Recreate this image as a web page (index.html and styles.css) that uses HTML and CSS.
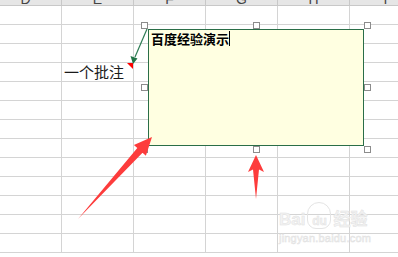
FILE: index.html
```html
<!DOCTYPE html>
<html lang="zh-CN">

<head>
    <meta charset="UTF-8">
    <title>批注</title>
    <link rel="stylesheet" href="styles.css">
</head>

<body>
    <div class="sheet">
        <div class="col-head">D</div><div class="col-head">E</div><div class="col-head">F</div><div class="col-head">G</div><div class="col-head">H</div><div class="col-head">I</div>
        <div class="cell"></div><div class="cell"></div><div class="cell"></div><div class="cell"></div><div class="cell"></div><div class="cell"></div>
        <div class="cell"></div><div class="cell"></div><div class="cell"></div><div class="cell"></div><div class="cell"></div><div class="cell"></div>
        <div class="cell"></div><div class="cell"></div><div class="cell"></div><div class="cell"></div><div class="cell"></div><div class="cell"></div>
        <div class="cell"></div><div class="cell has-note">一个批注</div><div class="cell"></div><div class="cell"></div><div class="cell"></div><div class="cell"></div>
        <div class="cell"></div><div class="cell"></div><div class="cell"></div><div class="cell"></div><div class="cell"></div><div class="cell"></div>
        <div class="cell"></div><div class="cell"></div><div class="cell"></div><div class="cell"></div><div class="cell"></div><div class="cell"></div>
        <div class="cell"></div><div class="cell"></div><div class="cell"></div><div class="cell"></div><div class="cell"></div><div class="cell"></div>
        <div class="cell"></div><div class="cell"></div><div class="cell"></div><div class="cell"></div><div class="cell"></div><div class="cell"></div>
        <div class="cell"></div><div class="cell"></div><div class="cell"></div><div class="cell"></div><div class="cell"></div><div class="cell"></div>
        <div class="cell"></div><div class="cell"></div><div class="cell"></div><div class="cell"></div><div class="cell"></div><div class="cell"></div>
        <div class="cell"></div><div class="cell"></div><div class="cell"></div><div class="cell"></div><div class="cell"></div><div class="cell"></div>
        <div class="cell"></div><div class="cell"></div><div class="cell"></div><div class="cell"></div><div class="cell"></div><div class="cell"></div>
        <div class="cell"></div><div class="cell"></div><div class="cell"></div><div class="cell"></div><div class="cell"></div><div class="cell"></div>
    </div>

    <!-- comment box being edited -->
    <div class="comment">百度经验演示<span class="caret"></span></div>

    <span class="handle" style="left: 141px; top: 22px;"></span>
    <span class="handle" style="left: 253px; top: 22px;"></span>
    <span class="handle" style="left: 364px; top: 22px;"></span>
    <span class="handle" style="left: 141px; top: 84px;"></span>
    <span class="handle" style="left: 364px; top: 84px;"></span>
    <span class="handle" style="left: 141px; top: 146px;"></span>
    <span class="handle" style="left: 253px; top: 146px;"></span>
    <span class="handle" style="left: 364px; top: 146px;"></span>

    <svg class="overlay" width="398" height="257" viewBox="0 0 398 257">
        <!-- note indicator and leader line -->
        <polygon points="127,63 133,63 133,69" fill="#ff0000" />
        <line x1="147" y1="29" x2="135" y2="57" stroke="#2f7d55" stroke-width="1.2" />
        <polygon points="133,64 130.5,56 137.5,58.5" fill="#217346" />
        <!-- red pointer arrows -->
        <polygon points="78,219 137.3,148 133.9,145 152,137 145.9,155.8 142.5,152.8" fill="#fd3c3c" />
        <polygon points="256,155 264,172 259,169.5 256,199 253,169.5 248,172" fill="#fd3c3c" />
    </svg>

    <div class="watermark">
        <div class="mark-top">Bai<span class="paw">du</span>经验</div>
        <div class="mark-url">jingyan.baidu.com</div>
    </div>
</body>

</html>
```

FILE: styles.css
```css
body {
    margin: 0;
    background-color: #fff;
    font-family: "Liberation Sans", Arial, sans-serif;
    overflow: hidden;
    width: 398px;
    height: 257px;
    position: relative;
}

.sheet {
    display: grid;
    grid-template-columns: repeat(6, 72px);
    grid-template-rows: 20px;
    grid-auto-rows: 19px;
    margin: -14px 0 0 -10px;
}

.col-head {
    box-sizing: border-box;
    background-color: #e6e6e6;
    border-right: 1px solid #c8c8c8;
    border-bottom: 1px solid #c8c8c8;
    text-align: center;
    font-size: 14px;
    line-height: 18px;
    padding-top: 4px;
    color: #444;
}

.cell {
    box-sizing: border-box;
    border-right: 1px solid #d4d4d4;
    border-bottom: 1px solid #d4d4d4;
}

.has-note {
    font-family: "Noto Sans CJK SC", sans-serif;
    font-size: 15px;
    line-height: 18px;
    padding-left: 2px;
    color: #1a1a1a;
    white-space: nowrap;
}

.comment {
    position: absolute;
    left: 148px;
    top: 29px;
    width: 216px;
    height: 117px;
    box-sizing: border-box;
    border: 1px solid #2a6e48;
    background-color: #ffffe1;
    padding: 1px 0 0 2px;
    font-family: "Noto Sans CJK SC", sans-serif;
    font-weight: bold;
    font-size: 13px;
    line-height: 16px;
    color: #000;
}

.caret {
    display: inline-block;
    width: 0;
    height: 15px;
    border-left: 1px solid #000;
    vertical-align: -2px;
}

.handle {
    position: absolute;
    width: 7px;
    height: 7px;
    box-sizing: border-box;
    border: 1px solid #8c8c8c;
    background-color: #fff;
}

.overlay {
    position: absolute;
    left: 0;
    top: 0;
}

.watermark {
    position: absolute;
    left: 279px;
    top: 202px;
    color: #f3f3f3;
    -webkit-text-stroke: 0.5px #e2e2e2;
    font-family: "Liberation Sans", "Noto Sans CJK SC", sans-serif;
}

.mark-top {
    display: flex;
    align-items: flex-end;
    font-size: 17px;
    font-weight: bold;
    line-height: 18px;
}

.paw {
    display: inline-block;
    width: 24px;
    height: 27px;
    margin: 0 2px;
    border-radius: 12px 12px 9px 9px;
    border: 1px solid #e4e4e4;
    font-size: 12px;
    line-height: 14px;
    text-align: center;
    box-sizing: border-box;
    padding-top: 11px;
}

.mark-url {
    font-size: 11px;
    line-height: 12px;
    margin-top: 3px;
    letter-spacing: 0.2px;
}
```
